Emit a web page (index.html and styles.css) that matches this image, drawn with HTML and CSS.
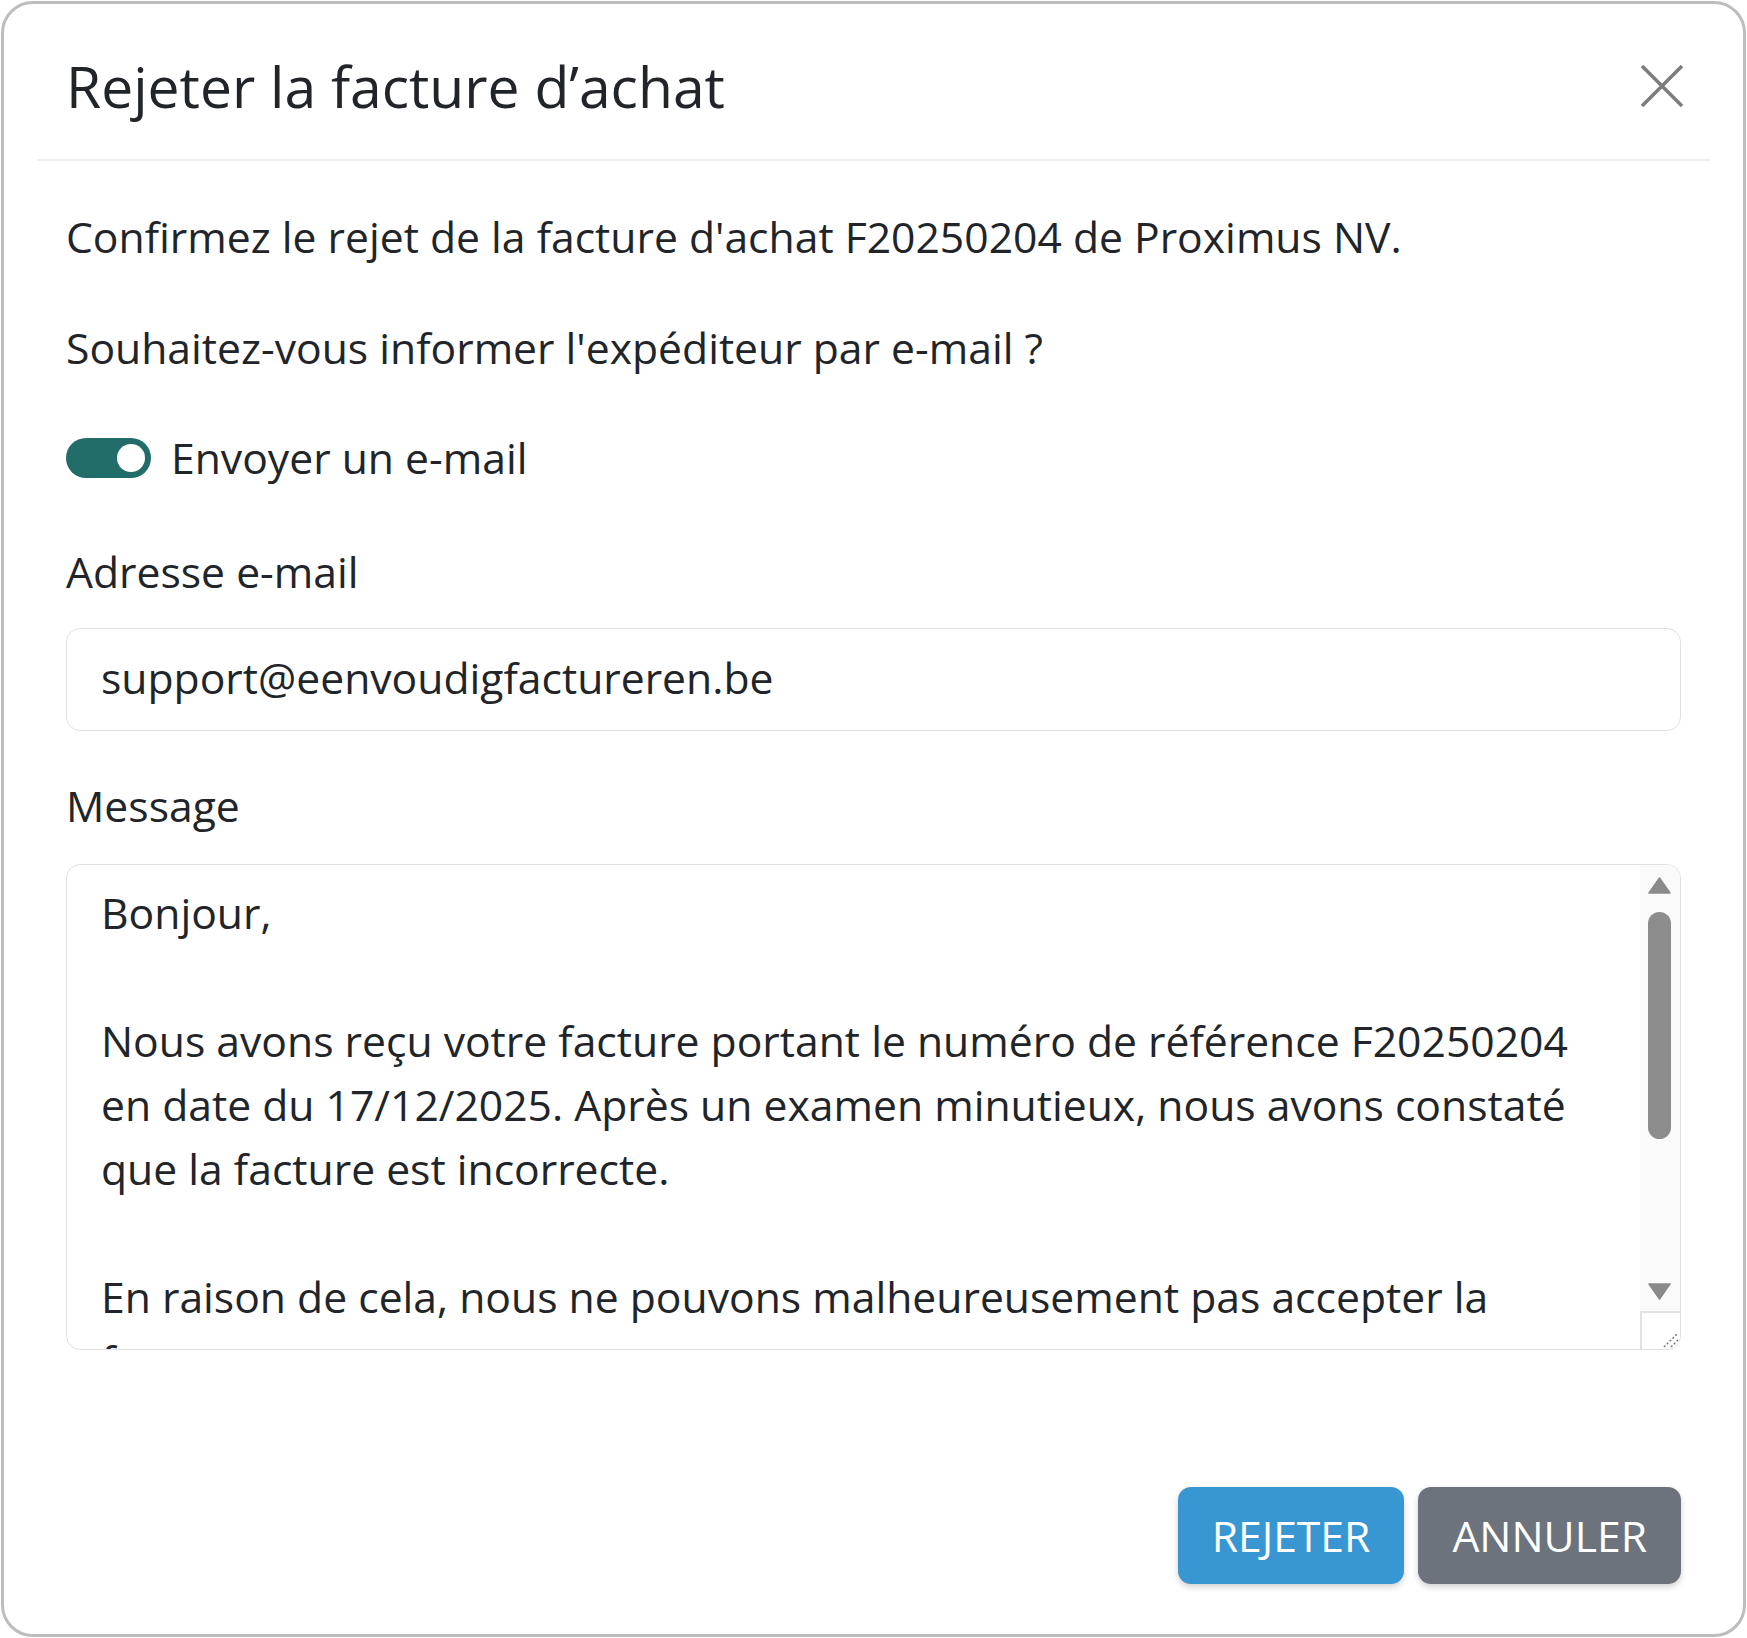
FILE: index.html
```html
<!DOCTYPE html>
<html lang="fr">
<head>
<meta charset="utf-8">
<title>Rejeter la facture d’achat</title>
<link rel="stylesheet" href="styles.css">
</head>
<body>
<div class="modal">
  <div class="modal-header">
    <h1 class="modal-title">Rejeter la facture d’achat</h1>
    <span class="close" aria-label="Fermer">
      <svg width="44" height="44" viewBox="0 0 44 44"><path d="M2 2 L42 42 M42 2 L2 42" stroke="#7d7d7d" stroke-width="3.6" fill="none"/></svg>
    </span>
  </div>
  <div class="modal-body">
    <p class="text p1">Confirmez le rejet de la facture d'achat F20250204 de Proximus NV.</p>
    <p class="text p2">Souhaitez-vous informer l'expéditeur par e-mail ?</p>
    <div class="switch-row">
      <span class="switch"><span class="knob"></span></span>
      <span class="switch-label">Envoyer un e-mail</span>
    </div>
    <div class="label label-email">Adresse e-mail</div>
    <div class="input">support@eenvoudigfactureren.be</div>
    <div class="label label-msg">Message</div>
    <div class="textarea">
      <div class="ta-content">
        <div class="ta-line">Bonjour,</div>
        <div class="ta-line">&nbsp;</div>
        <div class="ta-line">Nous avons reçu votre facture portant le numéro de référence F20250204</div>
        <div class="ta-line">en date du 17/12/2025. Après un examen minutieux, nous avons constaté</div>
        <div class="ta-line">que la facture est incorrecte.</div>
        <div class="ta-line">&nbsp;</div>
        <div class="ta-line">En raison de cela, nous ne pouvons malheureusement pas accepter la</div>
        <div class="ta-line">facture.</div>
      </div>
      <div class="scrollbar">
        <div class="sb-btn">
          <svg width="23" height="17" viewBox="0 0 23 17"><polygon points="11.5,1 22,16 1,16" fill="#8a8a8a" stroke="#8a8a8a" stroke-width="1.5" stroke-linejoin="round"/></svg>
        </div>
        <div class="sb-track"><div class="sb-thumb"></div></div>
        <div class="sb-btn">
          <svg width="23" height="17" viewBox="0 0 23 17"><polygon points="1,1 22,1 11.5,16" fill="#8a8a8a" stroke="#8a8a8a" stroke-width="1.5" stroke-linejoin="round"/></svg>
        </div>
        <div class="resizer">
          <svg width="20" height="20" viewBox="0 0 20 20"><path d="M4 18 L18 4 M11 18 L18 11" stroke="#777" stroke-width="1.5" stroke-dasharray="2 2" fill="none"/></svg>
        </div>
      </div>
    </div>
  </div>
  <div class="modal-footer">
    <button class="btn btn-primary">REJETER</button>
    <button class="btn btn-secondary">ANNULER</button>
  </div>
</div>
</body>
</html>
```
FILE: styles.css
```css
* { box-sizing: border-box; }
html, body { margin: 0; padding: 0; background: #ffffff; }
body {
  font-family: "Open Sans", "Noto Sans", sans-serif;
  color: #212529;
  font-size: 42.67px;
  line-height: 64px;
}
.modal {
  margin: 1px;
  width: 1745px;
  border: 3px solid #bdbdbd;
  border-radius: 32px;
  background: #fff;
}
.modal-header {
  display: flex;
  justify-content: space-between;
  align-items: center;
  margin: 0 33px;
  padding: 48px 29px 39px;
  border-bottom: 2px solid #eeeeee;
}
.modal-title {
  margin: 0;
  font-size: 57px;
  line-height: 68px;
  font-weight: 400;
  color: #212529;
}
.close { display: flex; margin-right: -3px; }
.modal-body { padding: 44px 62px 0; }
.text { margin: 0; }
.p1 { margin-bottom: 47px; }
.p2 { margin-bottom: 46px; }
.switch-row {
  display: flex;
  align-items: center;
  height: 64px;
  margin-bottom: 50px;
}
.switch {
  width: 85px;
  height: 40px;
  border-radius: 20px;
  background: #226d6a;
  display: flex;
  align-items: center;
  justify-content: flex-end;
  padding-right: 6px;
  margin-right: 20px;
}
.knob {
  width: 28px;
  height: 28px;
  border-radius: 50%;
  background: #fff;
}
.label-email { margin-bottom: 24px; }
.label-msg { margin-bottom: 26px; }
.input {
  height: 103px;
  border: 1px solid #dee2e6;
  border-radius: 14px;
  padding: 17px 34px 20px;
  margin-bottom: 43px;
}
.textarea {
  height: 486px;
  border: 1px solid #dee2e6;
  border-radius: 14px;
  display: flex;
  overflow: hidden;
}
.ta-content {
  flex: 1;
  padding: 16px 34px 0;
  overflow: hidden;
}
.ta-line { white-space: pre; }
.scrollbar {
  width: 40px;
  background: #fafafa;
  display: flex;
  flex-direction: column;
}
.sb-btn {
  height: 40px;
  display: flex;
  align-items: center;
  justify-content: center;
  padding-right: 1px;
}
.sb-track {
  flex: 1;
  display: flex;
  justify-content: center;
  padding-top: 7px;
  padding-right: 1px;
}
.sb-thumb {
  width: 23px;
  height: 227px;
  border-radius: 12px;
  background: #8c8c8c;
}
.resizer {
  height: 38px;
  border-top: 2px solid #e2e2e2;
  border-left: 2px solid #e2e2e2;
  background: #fff;
  display: flex;
  align-items: flex-end;
  justify-content: flex-end;
}
.modal-footer {
  display: flex;
  justify-content: flex-end;
  gap: 14px;
  padding: 137px 62px 50px;
}
.btn {
  font-family: "Open Sans", "Noto Sans", sans-serif;
  font-size: 42.67px;
  line-height: 64px;
  color: #fff;
  border: 0;
  border-radius: 13px;
  height: 97px;
  padding: 0 34px;
  box-shadow: 0 3px 6px rgba(0, 0, 0, 0.18);
}
.btn-primary { background: #3896d3; }
.btn-secondary { background: #6c737d; }
```
